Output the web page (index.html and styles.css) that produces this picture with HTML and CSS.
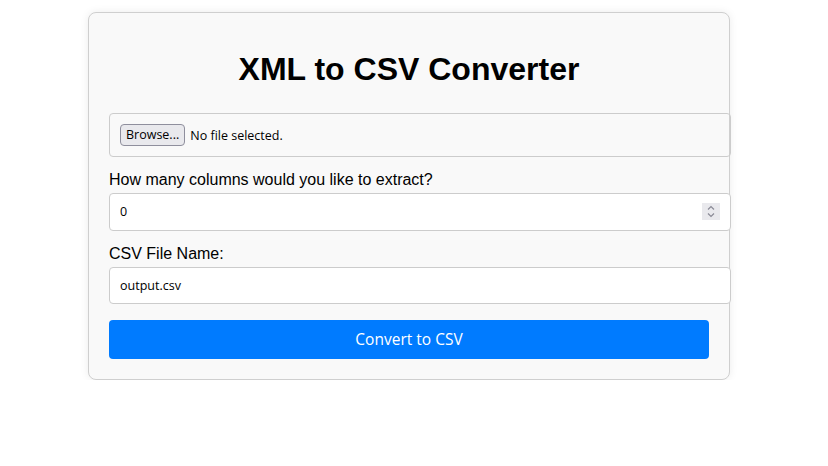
FILE: index.html
```html
<!DOCTYPE html>
<html lang="en">
<head>
<meta charset="utf-8">
<title>XML to CSV Converter</title>
<link rel="stylesheet" href="styles.css">
</head>
<body>
  <div class="card">
    <h1 class="title">XML to CSV Converter</h1>
    <div class="file-box">
      <button class="browse" type="button">Browse...</button>
      <span class="file-status">No file selected.</span>
    </div>
    <label class="label" for="cols">How many columns would you like to extract?</label>
    <div class="number-wrap">
      <input class="field" id="cols" type="text" value="0">
      <span class="spinner" aria-hidden="true">
        <svg width="18" height="17" viewBox="0 0 18 17">
          <path d="M6 6.5 L9 3.5 L12 6.5" fill="none" stroke="#8a8a96" stroke-width="1.2"/>
          <path d="M6 10.5 L9 13.5 L12 10.5" fill="none" stroke="#8a8a96" stroke-width="1.2"/>
        </svg>
      </span>
    </div>
    <label class="label" for="fname">CSV File Name:</label>
    <input class="field field-last" id="fname" type="text" value="output.csv">
    <button class="convert" type="button">Convert to CSV</button>
  </div>
</body>
</html>
```

FILE: styles.css
```css
html, body {
  margin: 0;
  padding: 0;
  background: #ffffff;
}

body {
  font-family: "Liberation Sans", Arial, sans-serif;
  color: #000;
  padding-right: 10px;
}

.card {
  width: 600px;
  margin: 12px auto 0;
  padding: 20px;
  background: #f9f9f9;
  border: 1px solid #cfcfcf;
  border-radius: 8px;
  box-shadow: 0 0 8px rgba(0, 0, 0, 0.08);
}

.title {
  margin: 18px 0 25px;
  font-size: 32px;
  font-weight: bold;
  text-align: center;
  line-height: 37px;
}

.file-box {
  width: 100%;
  padding: 10px;
  border: 1px solid #cccccc;
  border-radius: 4px;
  display: flex;
  align-items: center;
  height: 22px;
  margin-bottom: 14px;
}

.browse {
  height: 22px;
  padding: 0 5px;
  font-family: "Open Sans", "Noto Sans", sans-serif;
  font-size: 12.5px;
  color: #000;
  background: #e9e9ed;
  border: 1px solid #8f8f9d;
  border-radius: 4px;
  margin: 0 5px 0 0;
  line-height: 18px;
}

.file-status {
  font-family: "Open Sans", "Noto Sans", sans-serif;
  font-size: 12.5px;
}

.label {
  display: block;
  font-size: 16px;
  line-height: normal;
  margin-bottom: 4px;
}

.number-wrap {
  position: relative;
  margin-bottom: 14px;
}

.field {
  display: block;
  width: 100%;
  height: 15.5px;
  padding: 10px;
  margin: 0;
  border: 1px solid #cccccc;
  border-radius: 4px;
  background: #ffffff;
  font-family: "Open Sans", "Noto Sans", sans-serif;
  font-size: 12.5px;
  color: #000;
  outline: none;
}

.field-last {
  margin-bottom: 16px;
}

.spinner {
  position: absolute;
  right: -11px;
  top: 10px;
  width: 18px;
  height: 17px;
  background: #e9e9ed;
  display: block;
}

.spinner svg {
  display: block;
}

.convert {
  display: block;
  width: 100%;
  height: 38.5px;
  margin: 0;
  padding: 0;
  border: none;
  border-radius: 4px;
  background: #007bff;
  color: #ffffff;
  font-family: "Open Sans", "Noto Sans", sans-serif;
  font-size: 15.5px;
}
```
